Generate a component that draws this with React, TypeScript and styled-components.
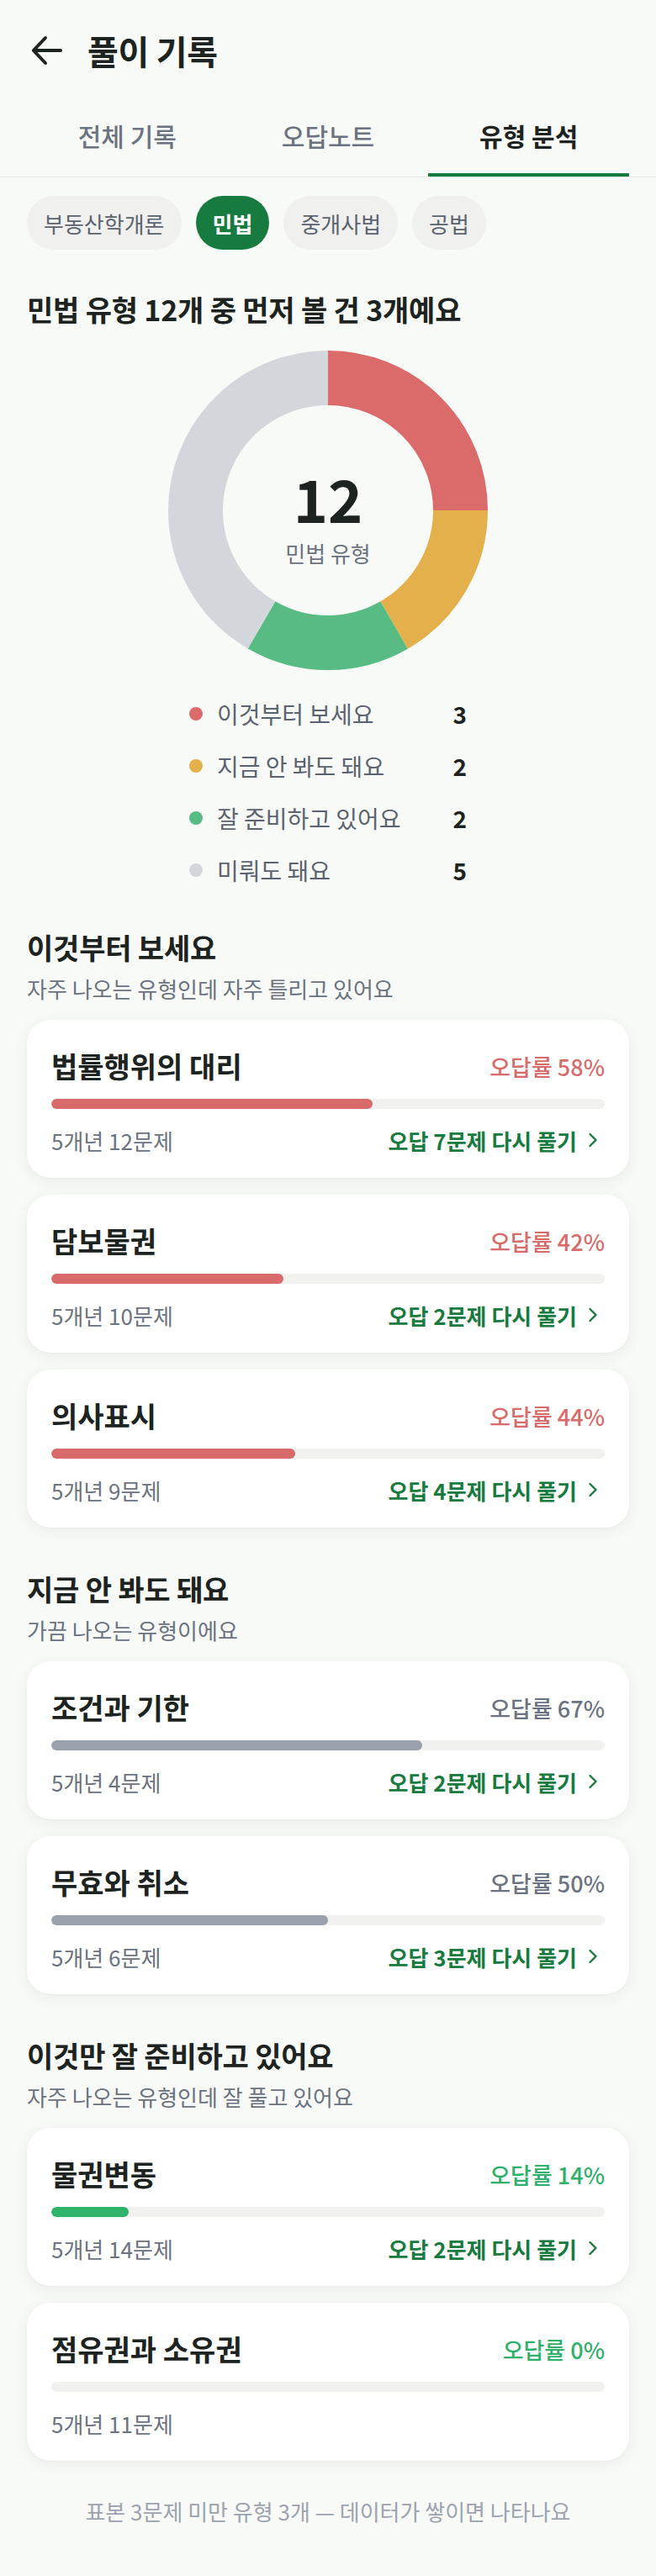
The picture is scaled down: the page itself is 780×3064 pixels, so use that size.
import React, { useState } from "react";
import styled, { createGlobalStyle } from "styled-components";

const GlobalStyle = createGlobalStyle`
  * {
    box-sizing: border-box;
  }
  body {
    margin: 0;
    background-color: #f8faf7;
    font-family: "Noto Sans CJK KR", "Noto Sans", sans-serif;
    color: #1c2320;
  }
`;

const Page = styled.div`
  width: 780px;
  min-height: 3064px;
  padding-bottom: 61px;
  background-color: #f8faf7;
`;

const Header = styled.header`
  display: flex;
  align-items: center;
  gap: 24px;
  height: 120px;
  padding: 0 32px;
`;

const BackButton = styled.button`
  display: flex;
  padding: 0;
  border: none;
  background: none;
  color: #1c2320;
  cursor: pointer;
`;

const Title = styled.h1`
  margin: 0;
  font-size: 40px;
  font-weight: 700;
  line-height: 48px;
  letter-spacing: -0.3px;
`;

const TabBar = styled.nav`
  display: flex;
  padding: 0 32px;
  border-bottom: 1px solid #e4e7e3;
`;

const Tab = styled.div<{ active: boolean }>`
  flex: 1;
  height: 90px;
  padding-top: 20px;
  text-align: center;
  font-size: 30px;
  line-height: 42px;
  font-weight: ${(p) => (p.active ? 700 : 500)};
  color: ${(p) => (p.active ? "#1c2320" : "#6b7280")};
  border-bottom: 4px solid ${(p) => (p.active ? "#177a3f" : "transparent")};
  cursor: pointer;
`;

const ChipRow = styled.div`
  display: flex;
  gap: 17px;
  margin-top: 22px;
  padding: 0 32px;
`;

const Chip = styled.button<{ active: boolean }>`
  height: 64px;
  padding: 0 20px;
  border: none;
  border-radius: 32px;
  font-family: inherit;
  font-size: 26px;
  font-weight: ${(p) => (p.active ? 700 : 400)};
  background-color: ${(p) => (p.active ? "#177a3f" : "#f0f1ef")};
  color: ${(p) => (p.active ? "#ffffff" : "#5b6370")};
  cursor: pointer;
`;

const Summary = styled.h2`
  margin: 48px 32px 0;
  font-size: 34px;
  font-weight: 700;
  line-height: 46px;
  letter-spacing: -0.2px;
`;

const DonutWrap = styled.div`
  position: relative;
  width: 380px;
  height: 380px;
  margin: 26px auto 0;
`;

const DonutCenter = styled.div`
  position: absolute;
  inset: 0;
  display: flex;
  flex-direction: column;
  align-items: center;
  justify-content: center;
  padding-top: 17px;
`;

const BigNumber = styled.div`
  font-size: 70px;
  font-weight: 700;
  line-height: 72px;
`;

const CenterLabel = styled.div`
  margin-top: 13px;
  font-size: 26px;
  line-height: 34px;
  color: #6b7280;
`;

const Legend = styled.ul`
  width: 330px;
  margin: 21px auto 0;
  padding: 0;
  list-style: none;
`;

const LegendRow = styled.li`
  display: flex;
  align-items: center;
  height: 62px;
`;

const Dot = styled.span<{ color: string }>`
  width: 16px;
  height: 16px;
  margin-right: 17px;
  border-radius: 50%;
  background-color: ${(p) => p.color};
`;

const LegendLabel = styled.span`
  flex: 1;
  font-size: 28px;
  color: #5b6370;
`;

const LegendCount = styled.span`
  font-size: 28px;
  font-weight: 700;
  color: #1c2320;
`;

const Section = styled.section<{ first?: boolean }>`
  margin-top: ${(p) => (p.first ? 38 : 50)}px;
  padding: 0 32px;
`;

const SectionTitle = styled.h3`
  margin: 0;
  font-size: 34px;
  font-weight: 700;
  line-height: 46px;
  letter-spacing: -0.2px;
`;

const SectionSub = styled.p`
  margin: 9px 0 0;
  font-size: 26px;
  line-height: 34px;
  color: #6b7280;
`;

const CardList = styled.div`
  display: flex;
  flex-direction: column;
  gap: 20px;
  margin-top: 20px;
`;

const Card = styled.div`
  height: 188px;
  padding: 32px 29px 27px;
  border-radius: 28px;
  background-color: #ffffff;
  box-shadow: 0 4px 18px rgba(30, 40, 30, 0.06), 0 1px 3px rgba(30, 40, 30, 0.03);
`;

const CardTop = styled.div`
  display: flex;
  justify-content: space-between;
  align-items: center;
  height: 46px;
`;

const CardTitle = styled.div`
  font-size: 34px;
  font-weight: 700;
  line-height: 46px;
`;

const Rate = styled.div<{ color: string }>`
  font-size: 27px;
  font-weight: 500;
  color: ${(p) => p.color};
`;

const Track = styled.div`
  height: 12px;
  margin-top: 16px;
  border-radius: 6px;
  background-color: #f1f2f0;
  overflow: hidden;
`;

const Fill = styled.div<{ color: string }>`
  height: 100%;
  border-radius: 6px;
  background-color: ${(p) => p.color};
`;

const CardBottom = styled.div`
  display: flex;
  justify-content: space-between;
  align-items: center;
  height: 36px;
  margin-top: 19px;
`;

const Meta = styled.span`
  font-size: 26px;
  color: #6b7280;
`;

const RetryLink = styled.a`
  display: flex;
  align-items: center;
  gap: 5px;
  font-size: 26px;
  font-weight: 700;
  color: #177a3f;
  text-decoration: none;
  cursor: pointer;
`;

const Footnote = styled.p`
  margin: 43px 0 0;
  text-align: center;
  font-size: 26px;
  line-height: 34px;
  color: #9ca3af;
`;

type Tone = "bad" | "mid" | "good";

const toneColors: Record<Tone, { text: string; bar: string }> = {
  bad: { text: "#d96a6a", bar: "#d96a6a" },
  mid: { text: "#6b7280", bar: "#9aa1ad" },
  good: { text: "#2fb06a", bar: "#2fb36a" },
};

type TypeItem = {
  name: string;
  rate: number;
  years: number;
  total: number;
  wrong: number;
};

type Group = {
  title: string;
  sub: string;
  tone: Tone;
  items: TypeItem[];
};

const groups: Group[] = [
  {
    title: "이것부터 보세요",
    sub: "자주 나오는 유형인데 자주 틀리고 있어요",
    tone: "bad",
    items: [
      { name: "법률행위의 대리", rate: 58, years: 5, total: 12, wrong: 7 },
      { name: "담보물권", rate: 42, years: 5, total: 10, wrong: 2 },
      { name: "의사표시", rate: 44, years: 5, total: 9, wrong: 4 },
    ],
  },
  {
    title: "지금 안 봐도 돼요",
    sub: "가끔 나오는 유형이에요",
    tone: "mid",
    items: [
      { name: "조건과 기한", rate: 67, years: 5, total: 4, wrong: 2 },
      { name: "무효와 취소", rate: 50, years: 5, total: 6, wrong: 3 },
    ],
  },
  {
    title: "이것만 잘 준비하고 있어요",
    sub: "자주 나오는 유형인데 잘 풀고 있어요",
    tone: "good",
    items: [
      { name: "물권변동", rate: 14, years: 5, total: 14, wrong: 2 },
      { name: "점유권과 소유권", rate: 0, years: 5, total: 11, wrong: 0 },
    ],
  },
];

const legend = [
  { label: "이것부터 보세요", count: 3, color: "#db6b6b" },
  { label: "지금 안 봐도 돼요", count: 2, color: "#e3b04c" },
  { label: "잘 준비하고 있어요", count: 2, color: "#58bb83" },
  { label: "미뤄도 돼요", count: 5, color: "#d3d7dc" },
];

const tabs = ["전체 기록", "오답노트", "유형 분석"];
const subjects = ["부동산학개론", "민법", "중개사법", "공법"];

const BackIcon = () => (
  <svg width="48" height="48" viewBox="0 0 24 24" fill="none" stroke="currentColor" strokeWidth="2" strokeLinecap="round" strokeLinejoin="round">
    <path d="M20 12H4.5" />
    <path d="M11 4.5 3.9 12l7.1 7.5" />
  </svg>
);

const Chevron = () => (
  <svg width="28" height="28" viewBox="0 0 24 24" fill="none" stroke="currentColor" strokeWidth="2" strokeLinecap="round" strokeLinejoin="round">
    <path d="m9 18 6-6-6-6" />
  </svg>
);

const Donut = () => {
  const r = 157.5;
  const c = 2 * Math.PI * r;
  const total = legend.reduce((s, l) => s + l.count, 0);
  let offset = 0;
  return (
    <svg width="380" height="380" viewBox="0 0 380 380">
      <g transform="rotate(-90 190 190)">
        {legend.map((l) => {
          const len = (l.count / total) * c;
          const el = (
            <circle
              key={l.label}
              cx="190"
              cy="190"
              r={r}
              fill="none"
              stroke={l.color}
              strokeWidth="65"
              strokeDasharray={`${len} ${c - len}`}
              strokeDashoffset={-offset}
            />
          );
          offset += len;
          return el;
        })}
      </g>
    </svg>
  );
};

const TypeCard = ({ item, tone }: { item: TypeItem; tone: Tone }) => (
  <Card>
    <CardTop>
      <CardTitle>{item.name}</CardTitle>
      <Rate color={toneColors[tone].text}>오답률 {item.rate}%</Rate>
    </CardTop>
    <Track>
      <Fill color={toneColors[tone].bar} style={{ width: `${item.rate}%` }} />
    </Track>
    <CardBottom>
      <Meta>
        {item.years}개년 {item.total}문제
      </Meta>
      {item.wrong > 0 && (
        <RetryLink>
          오답 {item.wrong}문제 다시 풀기
          <Chevron />
        </RetryLink>
      )}
    </CardBottom>
  </Card>
);

const App = () => {
  const [tab, setTab] = useState(2);
  const [subject, setSubject] = useState("민법");

  return (
    <Page>
      <GlobalStyle />
      <Header>
        <BackButton>
          <BackIcon />
        </BackButton>
        <Title>풀이 기록</Title>
      </Header>
      <TabBar>
        {tabs.map((t, i) => (
          <Tab key={t} active={tab === i} onClick={() => setTab(i)}>
            {t}
          </Tab>
        ))}
      </TabBar>
      <ChipRow>
        {subjects.map((s) => (
          <Chip key={s} active={subject === s} onClick={() => setSubject(s)}>
            {s}
          </Chip>
        ))}
      </ChipRow>

      <Summary>민법 유형 12개 중 먼저 볼 건 3개예요</Summary>
      <DonutWrap>
        <Donut />
        <DonutCenter>
          <BigNumber>12</BigNumber>
          <CenterLabel>민법 유형</CenterLabel>
        </DonutCenter>
      </DonutWrap>
      <Legend>
        {legend.map((l) => (
          <LegendRow key={l.label}>
            <Dot color={l.color} />
            <LegendLabel>{l.label}</LegendLabel>
            <LegendCount>{l.count}</LegendCount>
          </LegendRow>
        ))}
      </Legend>

      {groups.map((g, i) => (
        <Section key={g.title} first={i === 0}>
          <SectionTitle>{g.title}</SectionTitle>
          <SectionSub>{g.sub}</SectionSub>
          <CardList>
            {g.items.map((item) => (
              <TypeCard key={item.name} item={item} tone={g.tone} />
            ))}
          </CardList>
        </Section>
      ))}

      <Footnote>표본 3문제 미만 유형 3개 — 데이터가 쌓이면 나타나요</Footnote>
    </Page>
  );
};

export default App;
